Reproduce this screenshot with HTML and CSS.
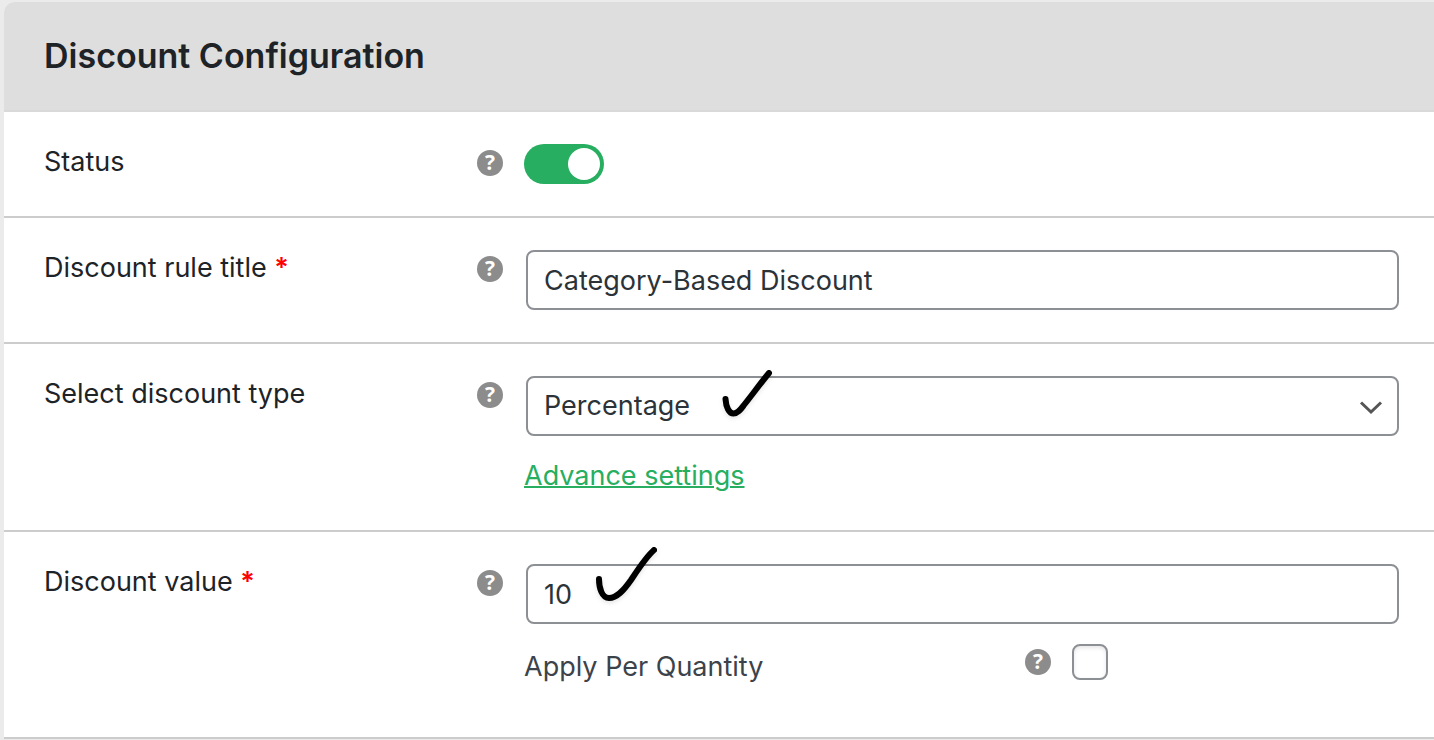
FILE: index.html
```html
<!DOCTYPE html>
<html lang="en">
<head>
  <meta charset="utf-8">
  <title>Discount Configuration</title>
  <link rel="stylesheet" href="styles.css">
</head>
<body>
  <form class="panel">
    <h2 class="panel-title">Discount Configuration</h2>

    <div class="row">
      <label class="row-label" for="status">Status</label>
      <span class="help">?</span>
      <div class="field">
        <input type="checkbox" class="toggle" id="status" checked>
      </div>
    </div>

    <div class="row">
      <label class="row-label" for="ruleTitle">Discount rule title <span class="required">*</span></label>
      <span class="help">?</span>
      <div class="field">
        <input type="text" class="control" id="ruleTitle" value="Category-Based Discount">
      </div>
    </div>

    <div class="row">
      <label class="row-label" for="discountType">Select discount type</label>
      <span class="help">?</span>
      <div class="field">
        <div class="select-wrap">
          <select class="control" id="discountType">
            <option>Percentage</option>
            <option>Fixed</option>
          </select>
          <svg class="chevron" viewBox="0 0 24 16" aria-hidden="true">
            <path d="M2 2.5 L12 12 L22 2.5" />
          </svg>
          <svg class="mark mark-type" viewBox="0 0 60 56" aria-hidden="true">
            <path d="M7.500 33 C8 41 11 47.500 15.500 47.500 C20 47.500 23 43 26 39 C34 29 42 18 51 7" />
          </svg>
        </div>
        <a class="advance-link" href="#">Advance settings</a>
      </div>
    </div>

    <div class="row">
      <label class="row-label" for="discountValue">Discount value <span class="required">*</span></label>
      <span class="help">?</span>
      <div class="field">
        <input type="text" inputmode="numeric" class="control" id="discountValue" value="10">
        <svg class="mark mark-value" viewBox="0 0 70 64" aria-hidden="true">
          <path d="M9 37 C9 46 12 56 19 56 C27 56 34 48 41 38 C49 26 56 15 64 8" />
        </svg>
        <div class="sub-option">
          <label class="sub-label" for="perQuantity">Apply Per Quantity</label>
          <span class="help">?</span>
          <input type="checkbox" class="checkbox" id="perQuantity">
        </div>
      </div>
    </div>
  </form>
</body>
</html>
```
FILE: styles.css
```css
* {
  box-sizing: border-box;
}

body {
  margin: 0;
  padding: 2px 0 0 4px;
  background-color: #ebebeb;
  color: #1d2327;
  font-family: Inter, "Liberation Sans", sans-serif;
  font-size: 27px;
  line-height: 32px;
}

.panel {
  background-color: #fff;
  border-top-left-radius: 10px;
  overflow: hidden;
}

.panel-title {
  margin: 0;
  padding: 33px 40px;
  background-color: #dedede;
  border-bottom: 2px solid #d9d9d9;
  font-size: 34px;
  font-weight: 600;
  line-height: 42px;
}

.row {
  display: flex;
  align-items: flex-start;
  padding: 32px 35px 32px 40px;
  border-bottom: 2px solid #ccc;
}

.row-label {
  width: 433px;
  margin-top: 2px;
}

.required {
  color: #f00;
  font-weight: 600;
}

.help {
  flex: none;
  width: 26px;
  height: 26px;
  margin-top: 6px;
  border-radius: 50%;
  background-color: #8c8c8c;
  color: #fff;
  font-family: "Open Sans", sans-serif;
  font-size: 21px;
  font-weight: 700;
  line-height: 25px;
  text-align: center;
}

.field {
  position: relative;
  flex: 1;
  margin-left: 21px;
}

.toggle {
  display: block;
  appearance: none;
  width: 80px;
  height: 40px;
  margin: 0;
  padding: 4px;
  border-radius: 20px;
  background-color: #27ae60;
}

.toggle::before {
  content: "";
  display: block;
  width: 32px;
  height: 32px;
  border-radius: 50%;
  background-color: #fff;
}

.toggle:checked::before {
  margin-left: auto;
}

.control {
  display: block;
  appearance: none;
  width: calc(100% - 2px);
  height: 60px;
  margin: 0 0 0 2px;
  padding: 0 16px;
  border: 2px solid #8c8f94;
  border-radius: 8px;
  background-color: #fff;
  color: #2c3338;
  font: inherit;
}

.select-wrap {
  position: relative;
}

.chevron {
  position: absolute;
  top: 24px;
  right: 16px;
  width: 24px;
  height: 16px;
  fill: none;
  stroke: #555;
  stroke-width: 3;
}

/* hand-drawn ticks over the fields */
.mark {
  position: absolute;
  fill: none;
  stroke: #000;
  stroke-width: 6;
  stroke-linecap: round;
  stroke-linejoin: round;
  filter: drop-shadow(0 2px 2px rgba(0, 0, 0, 0.1));
  pointer-events: none;
}

.mark-type {
  top: -10px;
  left: 194px;
  width: 60px;
  height: 56px;
}

.mark-value {
  top: -22px;
  left: 66px;
  width: 70px;
  height: 64px;
}

.advance-link {
  display: inline-block;
  margin-top: 24px;
  margin-bottom: 6px;
  color: #27ae60;
  text-decoration-thickness: 2px;
}

.sub-option {
  display: flex;
  align-items: flex-start;
  margin-top: 20px;
  margin-bottom: 22px;
}

.sub-option .help {
  margin-top: 5px;
}

.sub-label {
  width: 501px;
  margin-top: 7px;
  color: #3c434a;
}

.checkbox {
  appearance: none;
  width: 36px;
  height: 36px;
  margin: 0 0 0 21px;
  border: 2px solid #8c8f94;
  border-radius: 8px;
  background-color: #fff;
  box-shadow: inset 0 2px 4px rgba(0, 0, 0, 0.1);
}
```
